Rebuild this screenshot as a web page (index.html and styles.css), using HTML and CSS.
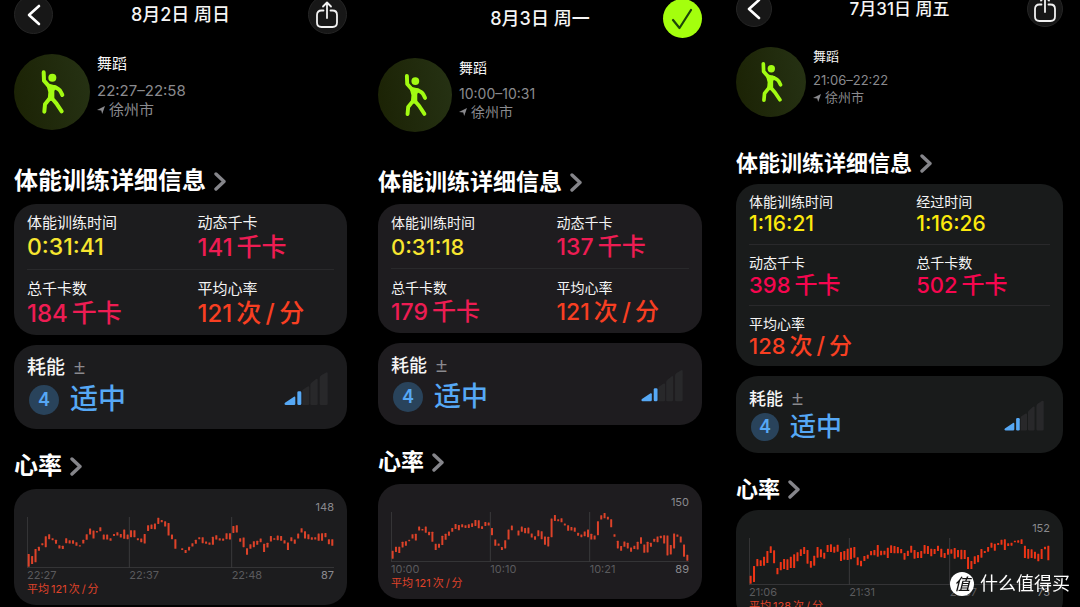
FILE: index.html
```html
<!DOCTYPE html>
<html lang="zh-CN">

<head>
  <meta charset="UTF-8" />
  <meta name="viewport" content="width=device-width, initial-scale=1.0" />
  <title>体能训练记录</title>

  <link rel="stylesheet" href="styles.css">
</head>

<body>

  <svg class="symbols" aria-hidden="true">
    <symbol id="back" viewBox="0 0 14 22">
      <path d="M12 2 L2 11 L12 20" fill="none" stroke="#fff" stroke-width="2.6" stroke-linecap="round" stroke-linejoin="round" />
    </symbol>
    <symbol id="next" viewBox="0 0 12 19">
      <path d="M2 2 L10 9.5 L2 17" fill="none" stroke="#85858a" stroke-width="3.4" stroke-linecap="round" stroke-linejoin="round" />
    </symbol>
    <symbol id="share" viewBox="0 0 24 28">
      <path d="M8.5 9.5 H6.5 Q2 9.5 2 14 V21.500 Q2 26 6.500 26 H17.500 Q22 26 22 21.500 V14 Q22 9.500 17.500 9.500 H15.500 M12 17 V2 M8 5.500 L12 1.500 L16 5.500" fill="none" stroke="#f2f2f2" stroke-width="1.8" stroke-linecap="round" stroke-linejoin="round" />
    </symbol>
    <symbol id="check" viewBox="0 0 22 22">
      <path d="M2 12 L8.500 20 L20 2" fill="none" stroke="#1b4408" stroke-width="2.2" stroke-linecap="round" stroke-linejoin="round" />
    </symbol>
    <symbol id="dance" viewBox="0 0 228 228">
      <circle cx="115" cy="71" r="12" fill="#a2fb12" />
      <path d="M96 88 L108 90 L128 95 L121 112 L121 132 L112 141 L101 139 L103 115 Z" fill="#a2fb12" />
      <path d="M89 55 L90 80 L105 97 M119 99 Q136 104 140 113 L145 123 M108 132 L93 151 L91 173 M113 132 L127 148 L143 172" fill="none" stroke="#a2fb12" stroke-width="12" stroke-linecap="round" stroke-linejoin="round" />
    </symbol>
    <symbol id="location" viewBox="0 0 10 10">
      <path d="M0 5 L10 0 L6.500 10 L5.300 5.500 Z" fill="#8a8a8e" />
    </symbol>
    <symbol id="level" viewBox="0 0 132 99">
      <path d="M3 92 L30 74 Q34 73 34 77 V95 Q34 99 30 99 H5 Q-1 97 3 92 Z" fill="#56a8f5" />
      <rect x="40" y="58" width="12" height="41" rx="4" fill="#56a8f5" />
      <path d="M55 54 L70 44 Q76 41 76 47 V95 Q76 99 72 99 H55 Z" fill="#28282a" />
      <path d="M79 40 Q79 34 84 31 L96 21 Q101 18 101 24 V95 Q101 99 97 99 H83 Q79 99 79 95 Z" fill="#28282a" />
      <path d="M107 19 Q107 13 112 10 L125 2 Q131 -1 131 5 V95 Q131 99 127 99 H111 Q107 99 107 95 Z" fill="#28282a" />
    </symbol>
  </svg>

  <main class="screens">

    <section class="screen screen-1">
      <header class="topbar">
        <button type="button" class="round" aria-label="返回"><svg class="icon-back"><use href="#back" /></svg></button>
        <h1>8月2日 周日</h1>
        <button type="button" class="round" aria-label="分享"><svg class="icon-share"><use href="#share" /></svg></button>
      </header>

      <div class="profile">
        <div class="avatar"><svg><use href="#dance" /></svg></div>
        <div class="info">
          <p class="name">舞蹈</p>
          <p>22:27–22:58</p>
          <p class="place"><svg><use href="#location" /></svg>徐州市</p>
        </div>
      </div>

      <h2><a href="#details-1">体能训练详细信息<svg><use href="#next" /></svg></a></h2>
      <dl class="card details" id="details-1">
        <div class="metric"><dt>体能训练时间</dt><dd class="yellow">0:31:41</dd></div>
        <div class="metric"><dt>动态千卡</dt><dd class="pink">141<span>千卡</span></dd></div>
        <div class="metric"><dt>总千卡数</dt><dd class="pink">184<span>千卡</span></dd></div>
        <div class="metric"><dt>平均心率</dt><dd class="red">121<span>次&thinsp;/&thinsp;分</span></dd></div>
      </dl>

      <div class="card effort">
        <div>
          <p class="effort-title">耗能<span>±</span></p>
          <p class="effort-value"><b>4</b>适中</p>
        </div>
        <svg><use href="#level" /></svg>
      </div>

      <h2 class="heart"><a href="#heart-1">心率<svg><use href="#next" /></svg></a></h2>
      <div class="card chart" id="heart-1">
        <p class="max">148</p>
        <svg class="plot" data-chart="0" preserveAspectRatio="none"></svg>
        <div class="axis"><span>22:27</span><span>22:37</span><span>22:48</span><span class="min">87</span></div>
        <p class="average">平均&thinsp;121&thinsp;次&thinsp;/&thinsp;分</p>
      </div>
    </section>

    <section class="screen screen-2">
      <header class="topbar">
        <span class="spacer"></span>
        <h1>8月3日 周一</h1>
        <button type="button" class="round done" aria-label="完成"><svg class="icon-check"><use href="#check" /></svg></button>
      </header>

      <div class="profile">
        <div class="avatar"><svg><use href="#dance" /></svg></div>
        <div class="info">
          <p class="name">舞蹈</p>
          <p>10:00–10:31</p>
          <p class="place"><svg><use href="#location" /></svg>徐州市</p>
        </div>
      </div>

      <h2><a href="#details-2">体能训练详细信息<svg><use href="#next" /></svg></a></h2>
      <dl class="card details" id="details-2">
        <div class="metric"><dt>体能训练时间</dt><dd class="yellow">0:31:18</dd></div>
        <div class="metric"><dt>动态千卡</dt><dd class="pink">137<span>千卡</span></dd></div>
        <div class="metric"><dt>总千卡数</dt><dd class="pink">179<span>千卡</span></dd></div>
        <div class="metric"><dt>平均心率</dt><dd class="red">121<span>次&thinsp;/&thinsp;分</span></dd></div>
      </dl>

      <div class="card effort">
        <div>
          <p class="effort-title">耗能<span>±</span></p>
          <p class="effort-value"><b>4</b>适中</p>
        </div>
        <svg><use href="#level" /></svg>
      </div>

      <h2 class="heart"><a href="#heart-2">心率<svg><use href="#next" /></svg></a></h2>
      <div class="card chart" id="heart-2">
        <p class="max">150</p>
        <svg class="plot" data-chart="1" preserveAspectRatio="none"></svg>
        <div class="axis"><span>10:00</span><span>10:10</span><span>10:21</span><span class="min">89</span></div>
        <p class="average">平均&thinsp;121&thinsp;次&thinsp;/&thinsp;分</p>
      </div>
    </section>

    <section class="screen screen-3">
      <header class="topbar">
        <button type="button" class="round" aria-label="返回"><svg class="icon-back"><use href="#back" /></svg></button>
        <h1>7月31日 周五</h1>
        <button type="button" class="round" aria-label="分享"><svg class="icon-share"><use href="#share" /></svg></button>
      </header>

      <div class="profile">
        <div class="avatar"><svg><use href="#dance" /></svg></div>
        <div class="info">
          <p class="name">舞蹈</p>
          <p>21:06–22:22</p>
          <p class="place"><svg><use href="#location" /></svg>徐州市</p>
        </div>
      </div>

      <h2><a href="#details-3">体能训练详细信息<svg><use href="#next" /></svg></a></h2>
      <dl class="card details" id="details-3">
        <div class="metric"><dt>体能训练时间</dt><dd class="yellow">1:16:21</dd></div>
        <div class="metric"><dt>经过时间</dt><dd class="yellow">1:16:26</dd></div>
        <div class="metric"><dt>动态千卡</dt><dd class="pink">398<span>千卡</span></dd></div>
        <div class="metric"><dt>总千卡数</dt><dd class="pink">502<span>千卡</span></dd></div>
        <div class="metric"><dt>平均心率</dt><dd class="red">128<span>次&thinsp;/&thinsp;分</span></dd></div>
      </dl>

      <div class="card effort">
        <div>
          <p class="effort-title">耗能<span>±</span></p>
          <p class="effort-value"><b>4</b>适中</p>
        </div>
        <svg><use href="#level" /></svg>
      </div>

      <h2 class="heart"><a href="#heart-3">心率<svg><use href="#next" /></svg></a></h2>
      <div class="card chart" id="heart-3">
        <p class="max">152</p>
        <svg class="plot" data-chart="2" preserveAspectRatio="none"></svg>
        <div class="axis"><span>21:06</span><span>21:31</span><span>21:57</span><span class="min">73</span></div>
        <p class="average">平均&thinsp;128&thinsp;次&thinsp;/&thinsp;分</p>
      </div>
    </section>

  </main>

  <div class="watermark"><span class="mark">值</span>什么值得买</div>

  <script src="charts.js"></script>
</body>

</html>
```
FILE: charts.js
```js
// each sample is "top-bottom" of one heart rate range, "x" is a gap
const charts = [
  {
    top: 239, height: 154, color: "#dd4229",
    samples: "351-389 357-381 336-376 329-341 318-324 297-330 291-306 303-309 308-320 324-334 326-336 303-318 309-319 309-320 315-326 324-328 308-319 291-308 274-292 280-304 281-286 270-282 292-307 292-307 303-311 290-296 285-295 290-301 277-305 292-306 279-300 279-300 303-309 304-315 290-319 264-281 262-275 259-276 241-260 248-255 252-268 257-295 292-306 306-335 x 333-339 339-348 329-340 318-328 308-320 300-306 300-318 313-320 316-323 299-323 294-307 303-310 304-311 288-306 288-307 266-287 264-286 303-314 301-330 333-353 321-335 312-330 311-323 304-315 320-345 317-331 296-313 303-308 295-309 296-311 309-319 316-339 300-312 307-320 289-304 273-286 282-304 291-306 300-308 300-307 289-311 288-311 287-300 306-321 306-326"
  },
  {
    top: 216, height: 151, color: "#dd4229",
    samples: "333-357 321-337 321-340 306-323 304-318 300-304 283-296 282-302 260-272 267-272 260-279 276-286 276-306 312-331 312-324 288-316 282-300 275-288 264-276 252-267 255-271 253-262 256-264 253-264 250-261 240-258 241-265 259-267 246-258 248-257 264-286 299-318 311-318 322-331 301-326 269-299 257-271 x 272-287 260-276 264-280 263-281 281-293 289-300 271-289 274-298 290-315 291-320 236-292 225-243 238-244 235-247 251-257 256-273 261-272 263-276 279-288 284-292 275-289 269-292 282-299 287-299 244-286 226-239 219-235 230-239 238-262 283-291 303-326 319-333 305-321 309-326 323-336 318-328 306-329 292-312 314-339 306-338 309-321 297-306 290-307 288-295 286-311 287-347 316-344 281-326 284-291 290-308 314-351 345-363"
  },
  {
    top: 198, height: 141, color: "#ee3516",
    samples: "311-335 282-330 261-283 265-282 254-281 237-273 223-243 235-274 288-307 270-295 261-291 262-294 254-288 247-288 241-268 232-252 225-246 234-275 267-287 251-281 225-257 232-256 242-260 219-240 217-240 224-242 218-239 240-267 237-263 230-264 227-262 225-257 256-280 266-283 252-267 248-260 237-250 234-250 219-254 236-250 236-248 227-258 220-243 222-244 225-244 231-244 243-263 236-252 221-242 234-260 240-258 237-258 219-245 222-246 230-253 231-246 221-237 230-256 243-258 230-248 232-245 228-260 234-256 233-262 234-261 255-291 267-291 253-276 249-271 231-257 237-243 225-239 212-227 215-236 213-219 203-218 202-234 214-222 212-221 206-211 205-212 202-216 221-258 231-260 232-258 239-260 245-268 231-261 224-232 221-265"
  }
];

document.querySelectorAll(".plot").forEach(function (plot) {
  const chart = charts[plot.dataset.chart];
  const samples = chart.samples.split(" ");
  const width = samples.length * 10;
  const bottom = chart.top + chart.height;
  let html = "";

  [1, width / 3, width * 2 / 3].forEach(x => {
    html += `<line class="grid" x1="${x}" x2="${x}" y1="${chart.top}" y2="${bottom}" />`;
  });
  html += `<line class="grid" x1="0" x2="${width}" y1="${bottom - 1}" y2="${bottom - 1}" />`;

  samples.forEach((sample, i) => {
    if (sample === "x") return;
    const [y1, y2] = sample.split("-").map(Number);
    html += `<rect x="${i * 10 + 2}" y="${y1}" width="6" height="${y2 - y1}" rx="1" fill="${chart.color}" />`;
  });

  plot.setAttribute("viewBox", `0 ${chart.top} ${width} ${chart.height}`);
  plot.innerHTML = html;
});
```
FILE: styles.css
```css
* {
  box-sizing: border-box;
}

body {
  margin: 0;
  background: #000;
  color: #f5f5f5;
  font-family: Inter, "Noto Sans CJK SC", sans-serif;
}

h1,
h2,
p,
dl,
dd {
  margin: 0;
}

.symbols {
  display: none;
}

.screens {
  display: grid;
  grid-template-columns: 1fr 1fr 1fr;
  height: 100vh;
  overflow: hidden;
}

/* the three phones are shown at slightly different scales */
.screen-1 {
  --card: #1c1c1e;
  --round: 39px;
  --avatar: 76px;
  --title: 18px;
  --heading: 24px;
  --heading-line: 30px;
  --info: 15px;
  --label: 15px;
  --time: 23px;
  --value: 24px;
  --unit: 25px;
  --sub: 19px;
  --effort: 28px;
  --badge: 30px;
  --level: 44px;
  --line: 20px;
  --info-line: 19px;
  --value-line: 29px;
  --effort-line: 41px;
  --plot: 51px;
  --above: 36px;
  --below: 8px;
  padding: 0 13px 0 14px;
  margin-top: -5px;
}

.screen-2 {
  --card: #1e1c1f;
  --round: 39px;
  --avatar: 74px;
  --title: 18px;
  --heading: 23px;
  --heading-line: 30px;
  --info: 14px;
  --label: 14px;
  --time: 22px;
  --value: 23px;
  --unit: 24px;
  --sub: 18px;
  --effort: 27px;
  --badge: 30px;
  --level: 42px;
  --line: 20px;
  --info-line: 18px;
  --value-line: 28px;
  --effort-line: 39px;
  --plot: 50px;
  --above: 35px;
  --below: 7px;
  padding: 0 18px;
  margin-top: -1px;
}

.screen-3 {
  --card: #191b1b;
  --round: 36px;
  --avatar: 70px;
  --title: 17px;
  --heading: 22px;
  --heading-line: 28px;
  --info: 13px;
  --label: 14px;
  --time: 21px;
  --value: 22px;
  --unit: 23px;
  --sub: 17px;
  --effort: 26px;
  --badge: 28px;
  --level: 40px;
  --line: 18px;
  --info-line: 17px;
  --value-line: 26px;
  --effort-line: 34px;
  --plot: 47px;
  --above: 32px;
  --below: 7px;
  padding: 0 17px 0 16px;
  margin-top: -9px;
}

.topbar {
  display: flex;
  align-items: center;
  justify-content: space-between;
}

.topbar h1 {
  font-size: var(--title);
  font-weight: 500;
  line-height: 24px;
}

.round,
.spacer {
  width: var(--round);
  height: var(--round);
}

.round {
  display: flex;
  align-items: center;
  justify-content: center;
  padding: 0;
  border: 1px solid #252525;
  border-radius: 50%;
  background: #171717;
  cursor: pointer;
}

.done {
  border: none;
  background: #a4ff0d;
}

.icon-back {
  width: 14px;
  height: 22px;
}

.icon-share {
  width: 24px;
  height: 28px;
}

.icon-check {
  width: 22px;
  height: 22px;
}

.profile {
  display: flex;
  gap: 7px;
  margin-top: 20px;
}

.avatar {
  width: var(--avatar);
  height: var(--avatar);
  border-radius: 50%;
  background: linear-gradient(80deg, #1b2204, #263214);
}

.avatar svg {
  display: block;
  width: 100%;
  height: 100%;
}

.info {
  color: #8a8a8e;
  font-size: var(--info);
  line-height: var(--info-line);
}

.info .name {
  margin-bottom: 7px;
  color: #f5f5f5;
  line-height: var(--line);
}

.place {
  display: flex;
  align-items: center;
  gap: 4px;
}

.place svg {
  width: 8px;
  height: 8px;
}

h2 {
  margin: var(--above) 0 var(--below);
  font-size: var(--heading);
  font-weight: 700;
  line-height: var(--heading-line);
}

.heart {
  margin-top: 22px;
}

h2 a {
  display: flex;
  align-items: center;
  gap: 8px;
  color: #fff;
  text-decoration: none;
}

h2 svg {
  width: 12px;
  height: 19px;
}

.card {
  border-radius: 22px;
  background: var(--card);
}

.details {
  display: grid;
  grid-template-columns: 5fr 4fr;
  padding: 0 13px;
}

.metric {
  padding: 9px 0 7px;
}

.metric:nth-child(n + 3) {
  border-top: 1px solid #29292b;
}

.metric:last-child:nth-child(odd) {
  grid-column: 1 / -1;
}

.metric dt {
  font-size: var(--label);
  line-height: var(--line);
}

.metric dd {
  font-size: var(--value);
  font-weight: 500;
  line-height: var(--value-line);
}

.metric dd span {
  margin-left: 4px;
  font-size: var(--unit);
}

.metric .yellow {
  color: #f7e52f;
  font-size: var(--time);
}

.pink {
  color: #ee1c53;
}

.red {
  color: #f83f22;
}

.screen-3 .yellow {
  color: #fce90d;
}

.screen-3 .pink {
  color: #f6064f;
}

.effort {
  display: flex;
  align-items: center;
  justify-content: space-between;
  margin-top: 10px;
  padding: 11px 19px 9px 13px;
}

.effort > svg {
  width: var(--level);
  height: 33px;
}

.effort-title {
  font-size: var(--sub);
  font-weight: 500;
  line-height: 22px;
}

.effort-title span {
  margin-left: 9px;
  color: #8a8a8e;
  font-family: "Liberation Sans", sans-serif;
  font-size: 20px;
  font-weight: 400;
}

.effort-value {
  display: flex;
  align-items: center;
  gap: 11px;
  padding-left: 2px;
  color: #56a8f5;
  font-size: var(--effort);
  font-weight: 500;
  line-height: var(--effort-line);
}

.effort-value b {
  width: var(--badge);
  height: var(--badge);
  border-radius: 50%;
  background: #29435b;
  font-size: 18px;
  font-weight: 600;
  line-height: var(--badge);
  text-align: center;
}

.chart {
  padding: 9px 13px;
}

.max {
  color: #8a8a8e;
  font-size: 11px;
  line-height: 18px;
  text-align: right;
}

.plot {
  display: block;
  width: 100%;
  height: var(--plot);
  margin-top: 1px;
}

.plot .grid {
  stroke: #3a3a3c;
  stroke-width: 1px;
  vector-effect: non-scaling-stroke;
}

.axis {
  display: grid;
  grid-template-columns: 5fr 5fr 4fr 1fr;
  color: #5a5a5d;
  font-size: 11px;
  line-height: 14px;
}

.axis .min {
  color: #8a8a8e;
  text-align: right;
}

.average {
  color: #e0432a;
  font-size: 11px;
  line-height: 14px;
}

.watermark {
  position: fixed;
  right: 10px;
  bottom: 10px;
  display: flex;
  align-items: center;
  gap: 6px;
  color: #fff;
  font-size: 18px;
  line-height: 26px;
}

.mark {
  width: 24px;
  height: 24px;
  border-radius: 50%;
  background: #fff;
  color: #111;
  font-size: 16px;
  font-style: italic;
  font-weight: 500;
  line-height: 24px;
  text-align: center;
}

@media (max-width: 768px) {
  .screens {
    grid-template-columns: 1fr;
    height: auto;
  }

  .screen {
    margin-top: 0;
    padding: 16px;
  }
}
```
